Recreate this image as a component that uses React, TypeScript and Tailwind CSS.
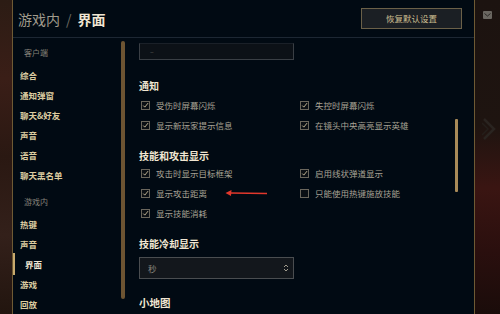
import React from 'react';

const font = { fontFamily: '"Noto Sans CJK SC", "Noto Sans", sans-serif' };

type Item = { label: string; kind?: 'group' | 'active' };

const navItems: Item[] = [
  { label: '客户端', kind: 'group' },
  { label: '综合' },
  { label: '通知弹窗' },
  { label: '聊天&好友' },
  { label: '声音' },
  { label: '语音' },
  { label: '聊天黑名单' },
  { label: '游戏内', kind: 'group' },
  { label: '热键' },
  { label: '声音' },
  { label: '界面', kind: 'active' },
  { label: '游戏' },
  { label: '回放' },
];

/** Small square checkbox with a cream tick. */
function Box({ checked }: { checked: boolean }) {
  return (
    <span className="flex h-[9px] w-[9px] shrink-0 items-center justify-center border border-[#6a665c] bg-[#0a0f14]">
      {checked && (
        <svg width="9" height="9" viewBox="0 0 9 9">
          <path d="M1.6 4.6 L3.6 6.6 L7.8 1.4" fill="none" stroke="#d6c8a4" strokeWidth="1.1" />
        </svg>
      )}
    </span>
  );
}

function Check({ label, checked = true, children }: { label: string; checked?: boolean; children?: React.ReactNode }) {
  return (
    <div className="flex h-[20px] items-center pl-[2px]">
      <Box checked={checked} />
      <span className="ml-[6px] text-[8.5px] leading-none text-[#a8a395]">{label}</span>
      {children}
    </div>
  );
}

function Heading({ children, className = '' }: { children: React.ReactNode; className?: string }) {
  return (
    <p className={`h-[14px] text-[10px] font-bold leading-[14px] text-[#f0e6d2] ${className}`}>{children}</p>
  );
}

export default function App() {
  return (
    <div className="flex h-[314px] w-[500px] overflow-hidden bg-[#010a13]" style={font}>
      {/* left art strip */}
      <div className="w-[13px] shrink-0 border-r border-[#6e5a34] bg-[linear-gradient(180deg,#2c1c14_0%,#3a1e17_25%,#2a1812_50%,#33201a_75%,#22150f_100%)]" />

      {/* main panel */}
      <div className="flex w-[461px] shrink-0 flex-col">
        <header className="flex h-[38px] shrink-0 items-center justify-between border-b border-[#1d2733] pl-[5px] pr-[12px]">
          <h1 className="text-[14px] leading-none">
            <span className="text-[#a09b8c]">游戏内</span>
            <span className="mx-[6px] text-[#6d6a62]">/</span>
            <span className="font-bold text-[#f0e6d2]">界面</span>
          </h1>
          <button className="flex h-[21px] w-[101px] items-center justify-center border border-[#6b6048] bg-[#1b1f24] text-[8.5px] text-[#cdbe91]">
            恢复默认设置
          </button>
        </header>

        <div className="flex min-h-0 flex-1">
          {/* sidebar */}
          <nav className="w-[106px] shrink-0 pt-[5px]">
            {navItems.map((it, i) => {
              if (it.kind === 'group') {
                return (
                  <div
                    key={i}
                    className={`flex h-[20px] items-center pl-[11px] text-[8px] text-[#86837a] ${i > 0 ? 'mt-[7px] mb-[2px]' : 'mb-[2px]'}`}
                  >
                    {it.label}
                  </div>
                );
              }
              if (it.kind === 'active') {
                return (
                  <div key={i} className="flex h-[20px] items-center">
                    <span className="h-[22px] w-[2px] bg-[#c8aa6e]" />
                    <span className="pl-[10px] text-[8.5px] font-bold text-[#f0e6d2]">{it.label}</span>
                  </div>
                );
              }
              return (
                <div key={i} className="flex h-[20px] items-center pl-[7px] text-[8.5px] font-bold text-[#dccca0]">
                  {it.label}
                </div>
              );
            })}
          </nav>

          {/* sidebar scrollbar */}
          <div className="ml-[2px] mt-[3px] h-[258px] w-[4px] shrink-0 rounded-[2px] bg-[#6d5432]" />

          {/* content */}
          <section className="min-w-0 flex-1 pl-[14px]">
            <div className="mt-[5px] flex h-[17px] w-[155px] items-center border border-[#3a3f45] border-t-[#1a2028] bg-[#0c1117] pl-[10px] text-[7px] text-[#5b5a56]">
              –
            </div>

            <Heading className="mt-[19px]">通知</Heading>
            <div className="mt-[2px] grid grid-cols-[159px_1fr]">
              <Check label="受伤时屏幕闪烁" />
              <Check label="失控时屏幕闪烁" />
              <Check label="显示新玩家提示信息" />
              <Check label="在镜头中央高亮显示英雄" />
            </div>

            <Heading className="mt-[14px]">技能和攻击显示</Heading>
            <div className="grid grid-cols-[159px_1fr]">
              <Check label="攻击时显示目标框架" />
              <Check label="启用线状弹道显示" />
              <Check label="显示攻击距离">
                <svg className="ml-[18px]" width="44" height="8" viewBox="0 0 44 8">
                  <line x1="5" y1="4" x2="42" y2="4.5" stroke="#e2382c" strokeWidth="1.4" />
                  <path d="M0.5 4 L6.5 1 L6 7 Z" fill="#e2382c" />
                </svg>
              </Check>
              <Check label="只能使用热键施放技能" checked={false} />
              <Check label="显示技能消耗" />
            </div>

            <Heading className="mt-[14px]">技能冷却显示</Heading>
            <div className="mt-[6px] flex h-[22px] w-[155px] items-center justify-between border border-[#4a4d50] bg-[#13171c] pl-[8px] pr-[4px]">
              <span className="text-[8.5px] text-[#8a877e]">秒</span>
              <svg width="6" height="10" viewBox="0 0 6 10">
                <path d="M1 4 L3 2 L5 4 M1 6 L3 8 L5 6" fill="none" stroke="#a09b8c" strokeWidth="1" />
              </svg>
            </div>

            <p className="mt-[17px] text-[10.5px] font-bold leading-[14px] text-[#f0e6d2]">小地图</p>
          </section>

          {/* content scrollbar */}
          <div className="mr-[16px] mt-[81px] h-[73px] w-[3px] shrink-0 rounded-[1px] bg-[#a88a58]" />
        </div>
      </div>

      {/* right art strip */}
      <div className="flex w-[26px] shrink-0 flex-col items-center border-l border-[#6e5a34] bg-[linear-gradient(180deg,#1c1310_0%,#1e1410_40%,#3a1512_60%,#2a0f0e_80%,#1a0c0a_100%)]">
        <span className="mt-[11px] flex h-[8px] w-[9px] items-center justify-center rounded-[1px] bg-[#6a6660]">
          <svg width="7" height="5" viewBox="0 0 7 5">
            <path d="M0.5 0.5 L3.5 3 L6.5 0.5" fill="none" stroke="#2b2724" strokeWidth="1" />
          </svg>
        </span>
        <svg className="ml-[2px] mt-[98px]" width="14" height="24" viewBox="0 0 14 24">
          <path d="M2 2 L12 12 L2 22" fill="none" stroke="#2a2420" strokeWidth="2.5" />
          <path d="M0 6 L6 12 L0 18" fill="none" stroke="#241e1a" strokeWidth="1.5" />
        </svg>
      </div>
    </div>
  );
}
